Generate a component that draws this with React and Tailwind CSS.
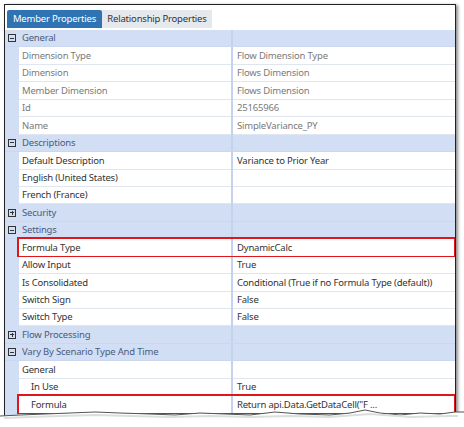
import React from "react";

const rows = [
  { type: "group", label: "General", open: true },
  { label: "Dimension Type", value: "Flow Dimension Type", muted: true },
  { label: "Dimension", value: "Flows Dimension", muted: true },
  { label: "Member Dimension", value: "Flows Dimension", muted: true },
  { label: "Id", value: "25165966", muted: true },
  { label: "Name", value: "SimpleVariance_PY", muted: true },
  { type: "group", label: "Descriptions", open: true },
  { label: "Default Description", value: "Variance to Prior Year" },
  { label: "English (United States)", value: "" },
  { label: "French (France)", value: "" },
  { type: "group", label: "Security", open: false },
  { type: "group", label: "Settings", open: true },
  { label: "Formula Type", value: "DynamicCalc", marked: true },
  { label: "Allow Input", value: "True" },
  { label: "Is Consolidated", value: "Conditional (True if no Formula Type (default))" },
  { label: "Switch Sign", value: "False" },
  { label: "Switch Type", value: "False" },
  { type: "group", label: "Flow Processing", open: false },
  { type: "group", label: "Vary By Scenario Type And Time", open: true },
  { type: "sub", label: "General" },
  { label: "In Use", value: "True", nested: true },
  { label: "Formula", value: 'Return api.Data.GetDataCell("F ...', nested: true, marked: true },
  { label: "Formula for Calculation Drill Down", value: "", nested: true },
];

function Toggle({ open }) {
  return (
    <span className="w-[8px] h-[8px] border border-[#333] flex items-center justify-center relative shrink-0">
      <span className="absolute w-[4px] h-px bg-[#333]" />
      {!open && <span className="absolute h-[4px] w-px bg-[#333]" />}
    </span>
  );
}

function Row({ row }) {
  if (row.type === "group") {
    return (
      <div className="h-[17.45px] flex bg-[#d2def4] border-b border-[#c9d7ef]">
        <div className="w-[226px] flex items-center pl-[3px] gap-[6px] text-[#4a5b7c]">
          <Toggle open={row.open} />
          <span>{row.label}</span>
        </div>
        <div className="w-[2px] bg-[#c3d3ee]" />
        <div className="flex-1" />
      </div>
    );
  }
  if (row.type === "sub") {
    return (
      <div className="h-[17.45px] flex bg-[#d2def4]">
        <div className="w-[14px]" />
        <div className="w-[212px] bg-white border-b border-[#dfe6f0] flex items-center pl-[3px] text-[#333]">
          {row.label}
        </div>
        <div className="w-[2px] bg-[#c3d3ee]" />
        <div className="flex-1 bg-white border-b border-[#dfe6f0]" />
      </div>
    );
  }
  return (
    <div className="h-[17.45px] flex bg-[#d2def4] relative">
      <div className="w-[14px]" />
      <div
        className={
          "w-[212px] bg-white border-b border-[#dfe6f0] flex items-center whitespace-nowrap overflow-hidden " +
          (row.nested ? "pl-[12px] " : "pl-[3px] ") +
          (row.muted ? "text-[#7a7a7a]" : "text-[#333]")
        }
      >
        {row.label}
      </div>
      <div className="w-[2px] bg-[#c3d3ee]" />
      <div
        className={
          "flex-1 bg-white border-b border-[#dfe6f0] flex items-center pl-[4px] whitespace-nowrap overflow-hidden " +
          (row.muted ? "text-[#7a7a7a]" : "text-[#333]")
        }
      >
        {row.value}
      </div>
      {row.marked && (
        <div className="absolute left-[12px] right-[-1px] top-[-2px] bottom-[-1px] border-2 border-[#e0161b] pointer-events-none" />
      )}
    </div>
  );
}

export default function App() {
  return (
    <div
      className="w-[464px] h-[427px] bg-white relative overflow-hidden"
      style={{ fontFamily: '"Noto Sans", "Open Sans", sans-serif' }}
    >
      <div className="absolute left-[4px] top-[4px] w-[452px] h-[420px] border border-[#222] bg-white shadow-[2px_1px_3px_rgba(0,0,0,0.45)] text-[9.5px] tracking-[-0.2px] leading-none overflow-hidden">
        {/* tabs */}
        <div className="h-[25px] flex items-end pl-[2px] pb-[2px]">
          <div className="h-[18px] w-[95px] flex items-center justify-center bg-[#2f73b3] text-white rounded-t-[2px]">
            Member Properties
          </div>
          <div className="h-[18px] w-[110px] flex items-center justify-center bg-[#e5e9ee] text-[#333]">
            Relationship Properties
          </div>
        </div>
        {/* property grid */}
        <div className="flex flex-col">
          {rows.map((r, i) => (
            <Row key={i} row={r} />
          ))}
        </div>
      </div>
      {/* torn bottom edge */}
      <svg className="absolute left-0 top-[404px]" width="464" height="23" viewBox="0 0 464 23">
        <path
          d="M0 12 L20 11 L45 10 L70 9 L95 8 L120 9 L150 10 L175 11 L200 9 L225 10 L250 11 L275 8 L300 10 L330 11 L350 9 L365 6 L380 9 L400 11 L420 9 L440 10 L455 8 L464 8 L464 23 L0 23 Z"
          fill="#fff"
        />
        <path
          d="M0 12 L20 11 L45 10 L70 9 L95 8 L120 9 L150 10 L175 11 L200 9 L225 10 L250 11 L275 8 L300 10 L330 11 L350 9 L365 6 L380 9 L400 11 L420 9 L440 10 L455 8 L464 8"
          fill="none"
          stroke="#555"
          strokeWidth="1"
        />
        <path
          d="M4 14 L30 13 L60 12 L95 11 L130 12 L170 13 L210 12 L250 13 L290 12 L330 13 L370 10 L410 13 L450 12 L458 12"
          fill="none"
          stroke="#ddd"
          strokeWidth="2"
        />
      </svg>
    </div>
  );
}
